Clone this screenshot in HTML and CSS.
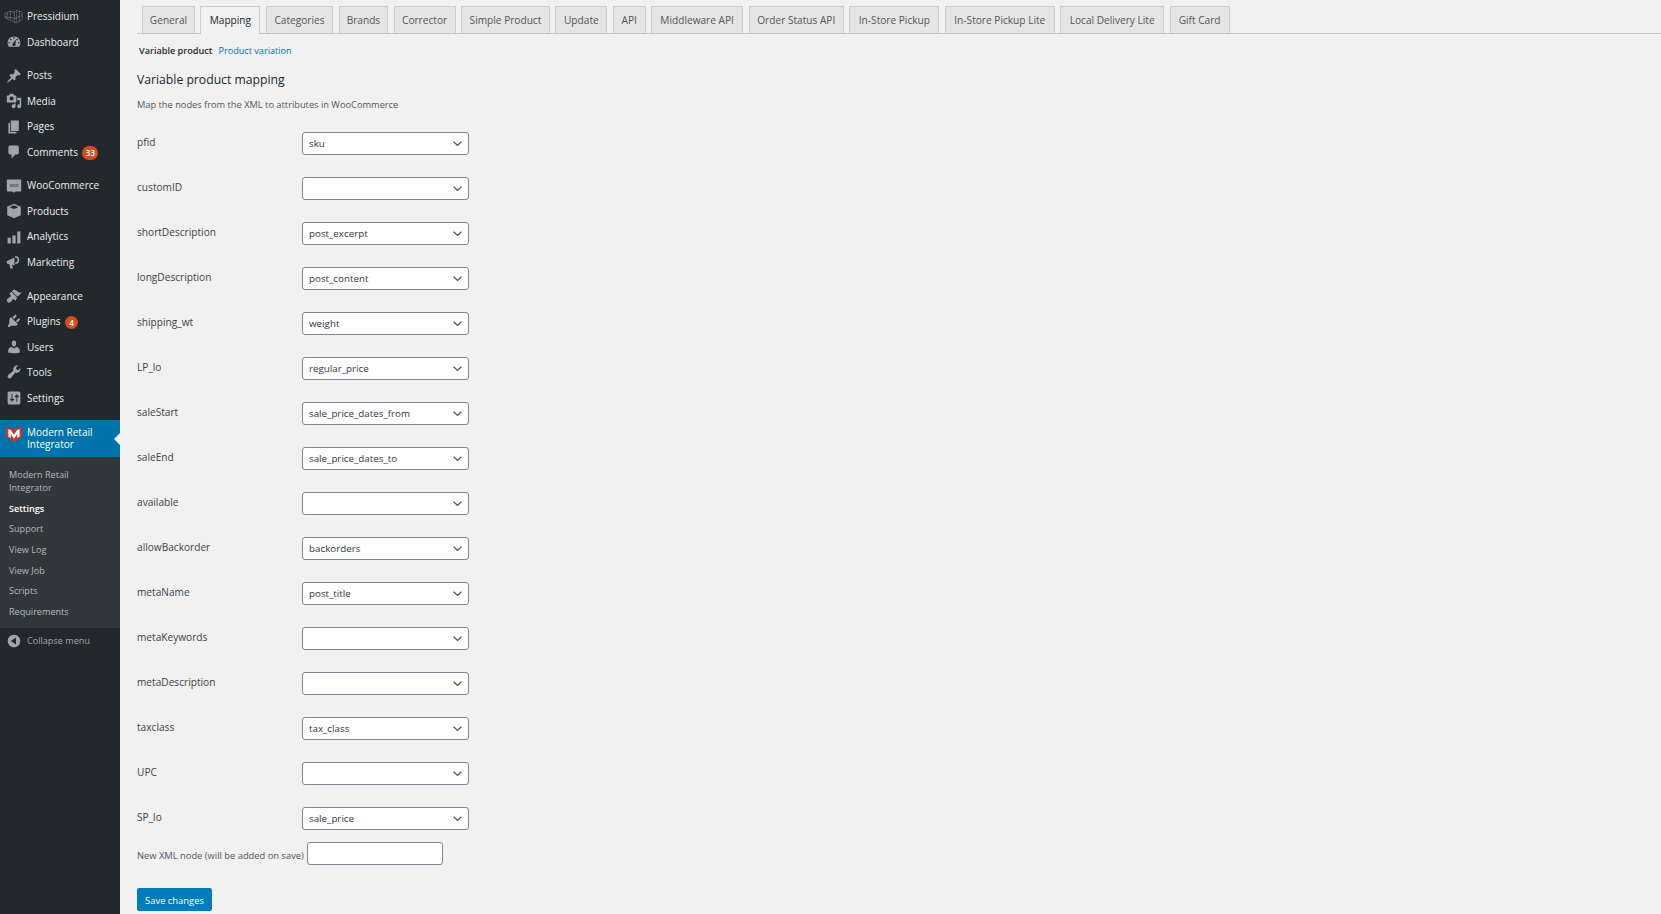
FILE: index.html
```html
<!DOCTYPE html>
<html lang="en">
<head>
<meta charset="utf-8">
<title>Modern Retail Integrator Settings</title>
<link rel="stylesheet" href="styles.css">
</head>
<body>
<div class="shell">
<aside class="sidebar">
  <ul class="menu">
    <li class="item"><svg class="ico wide" viewBox="0 0 24 20"><g fill="none" stroke="#a0a5aa" stroke-width=".8" stroke-dasharray="1.200 .7"><path d="M1 7l7-3 5 1 3-2 7 2v9l-7 5-3-1-5-3-6-2zM8 4v10M13 5v13M16 3v15M1 11l7 1 5 1 3-1 7-3M4 5.500l1 8M19.500 4v12"/></g></svg><span>Pressidium</span></li>
    <li class="item"><svg class="ico" viewBox="0 0 20 20"><path d="M3.760 16h12.480c1.100-1.370 1.760-3.110 1.760-5 0-4.420-3.580-8-8-8s-8 3.580-8 8c0 1.890.66 3.630 1.760 5zM10 4c.55 0 1 .45 1 1s-.45 1-1 1-1-.45-1-1 .45-1 1-1zM6 6c.55 0 1 .45 1 1s-.45 1-1 1-1-.45-1-1 .45-1 1-1zm8 0c.55 0 1 .45 1 1s-.45 1-1 1-1-.45-1-1 .45-1 1-1zm-5.370 5.550L12 7v6c0 1.100-.9 2-2 2s-2-.9-2-2c0-.57.24-1.080.63-1.450zM4 10c.55 0 1 .45 1 1s-.45 1-1 1-1-.45-1-1 .45-1 1-1zm12 0c.55 0 1 .45 1 1s-.45 1-1 1-1-.45-1-1 .45-1 1-1z"/></svg><span>Dashboard</span></li>
    <li class="item gap"><svg class="ico" viewBox="0 0 20 20"><path d="M10.440 3.020l1.820-1.820 6.360 6.350-1.830 1.820c-1.050-.68-2.480-.57-3.410.36l-.75.75c-.92.93-1.040 2.350-.35 3.410l-1.830 1.820-2.410-2.410-2.800 2.790c-.42.42-3.380 2.710-3.800 2.290s1.860-3.390 2.280-3.810l2.790-2.790L4.100 9.360l1.830-1.820c1.050.69 2.480.57 3.400-.36l.75-.75c.93-.92 1.050-2.350.36-3.410z"/></svg><span>Posts</span></li>
    <li class="item"><svg class="ico" viewBox="0 0 20 20"><path d="M13 11V4c0-.55-.45-1-1-1h-1.670L9 1H5L3.670 3H2c-.55 0-1 .45-1 1v7c0 .55.45 1 1 1h10c.55 0 1-.45 1-1zM7 4.500c1.380 0 2.500 1.120 2.500 2.500S8.380 9.500 7 9.500 4.500 8.380 4.500 7 5.620 4.500 7 4.500zM14 6h5v10.500c0 1.380-1.120 2.500-2.500 2.500S14 17.880 14 16.500s1.120-2.500 2.500-2.500c.17 0 .34.020.5.050V9h-3V6zm-4 8.050V13h2v3.500c0 1.380-1.120 2.500-2.500 2.500S7 17.880 7 16.500 8.120 14 9.500 14c.17 0 .34.020.5.050z"/></svg><span>Media</span></li>
    <li class="item"><svg class="ico" viewBox="0 0 20 20"><path d="M6 15V2h10v13H6zm-1 1h8v2H3V5h2v11z"/></svg><span>Pages</span></li>
    <li class="item"><svg class="ico" viewBox="0 0 20 20"><path d="M5 2h9c1.100 0 2 .9 2 2v7c0 1.100-.9 2-2 2h-2l-5 5v-5H5c-1.100 0-2-.9-2-2V4c0-1.100.9-2 2-2z"/></svg><span>Comments</span><b class="badge">33</b></li>
    <li class="item gap"><svg class="ico" viewBox="0 0 20 20"><path d="M2.200 2h15.600c.66 0 1.200.54 1.200 1.200v12.600c0 .66-.54 1.200-1.200 1.200H12l-2 1.500L8 17H2.200C1.540 17 1 16.460 1 15.800V3.200C1 2.540 1.540 2 2.200 2z"/><text class="woo" x="10" y="11.500" text-anchor="middle">woo</text></svg><span>WooCommerce</span></li>
    <li class="item"><svg class="ico" viewBox="0 0 20 20"><path d="M10 1l8.500 3.700v10.600L10 19l-8.500-3.700V4.700zM4.500 5.200L10 7.600l5.500-2.400L10 2.800z" fill-rule="evenodd"/></svg><span>Products</span></li>
    <li class="item"><svg class="ico" viewBox="0 0 20 20"><path d="M2 11h4v7H2zM8 8h4v10H8zM14 3h4v15h-4z"/></svg><span>Analytics</span></li>
    <li class="item"><svg class="ico" viewBox="0 0 20 20"><path d="M1 9l9.500-4.500v10L7.500 13.500l1 4.500H5.300l-1-5.300L1 12z"/><path d="M11.500 2.500a5 5 0 1 1 0 10v-2a3 3 0 1 0 0-6z"/></svg><span>Marketing</span></li>
    <li class="item gap"><svg class="ico" viewBox="0 0 20 20"><path d="M14.480 11.060L7.410 3.990l1.500-1.500c.5-.56 2.300-.47 3.510.32 1.210.8 1.430 1.280 2.910 2.100 1.180.64 2.450 1.260 4.450.85zm-.71.71L6.700 4.700 4.830 6.570c-.39.39-.39 1.020 0 1.410l1.060 1.060c.39.39.39 1.030 0 1.420-.6.6-1.430 1.110-2.210 1.690-.35.26-.7.53-1.010.84C1.430 13.220 1 14.260 1 15.200c0 .6.400 1.900 2 2.800 1.500.9 2.600-.2 3.100-.7.7-.7 1.500-1.900 2.300-3 .4-.5 1-.5 1.500-.1l1.070 1.060c.39.39 1.020.39 1.410 0z"/></svg><span>Appearance</span></li>
    <li class="item"><svg class="ico" viewBox="0 0 20 20"><path d="M13.110 4.360L9.870 7.600 8 5.730l3.240-3.240c.35-.34 1.050-.2 1.560.32.520.51.660 1.210.310 1.550zm-8 1.770l.91-1.120 9.010 9.010-1.190.84c-.71.71-2.630 1.160-3.820 1.160H6.140L4.900 17.260c-.59.59-1.540.59-2.120 0-.59-.58-.59-1.530 0-2.120l1.240-1.240v-3.880c0-1.130.4-3.100 1.090-3.890zm7.260 3.970l3.240-3.240c.34-.35 1.040-.21 1.550.31.520.51.660 1.210.31 1.550l-3.240 3.250z"/></svg><span>Plugins</span><b class="badge small">4</b></li>
    <li class="item"><svg class="ico" viewBox="0 0 20 20"><path d="M10 9.250c-2.270 0-2.730-3.440-2.730-3.440C7 4.020 7.820 2 9.970 2c2.160 0 2.980 2.020 2.710 3.810 0 0-.41 3.440-2.680 3.440zm0 2.570L12.720 10c2.390 0 4.520 2.330 4.520 4.530v2.490s-3.650 1.130-7.240 1.130c-3.650 0-7.240-1.130-7.240-1.130v-2.490c0-2.250 1.940-4.480 4.470-4.480z"/></svg><span>Users</span></li>
    <li class="item"><svg class="ico" viewBox="0 0 20 20"><path d="M16.680 9.770c-1.340 1.340-3.300 1.670-4.950.99l-5.410 6.520c-.99.99-2.590.99-3.570 0-.99-.98-.99-2.580 0-3.570l6.520-5.420c-.68-1.650-.35-3.610.99-4.950 1.280-1.280 3.120-1.620 4.720-1.060l-2.890 2.890 2.820 2.820 2.860-2.870c.53 1.580.18 3.390-1.090 4.650z"/></svg><span>Tools</span></li>
    <li class="item"><svg class="ico" viewBox="0 0 20 20"><path d="M18 16V4c0-1.100-.9-2-2-2H4c-1.100 0-2 .9-2 2v12c0 1.100.9 2 2 2h12c1.100 0 2-.9 2-2zM8 11h1c.55 0 1 .45 1 1s-.45 1-1 1H8v1.500c0 .28-.22.5-.5.5s-.5-.22-.5-.5V13H6c-.55 0-1-.45-1-1s.45-1 1-1h1V5.500c0-.28.22-.5.5-.5s.5.22.5.5V11zm5-2h-1c-.55 0-1-.45-1-1s.45-1 1-1h1V5.500c0-.28.22-.5.5-.5s.5.22.5.5V7h1c.55 0 1 .45 1 1s-.45 1-1 1h-1v5.500c0 .28-.22.5-.5.5s-.5-.22-.5-.5V9z"/></svg><span>Settings</span></li>
    <li class="item current gap"><svg class="ico logo" viewBox="0 0 20 20"><path class="logo-red" d="M0 0l5 3 5 1 5-1 5-3v14l-10 6-10-6z"/><path class="logo-white" d="M3 4l3 1 4 6 4-6 3-1v9l-3 2V10l-4 6-4-6v5l-3-2z"/></svg><span>Modern Retail<br>Integrator</span></li>
  </ul>
  <ul class="submenu">
    <li>Modern Retail<br>Integrator</li>
    <li class="on">Settings</li>
    <li>Support</li>
    <li>View Log</li>
    <li>View Job</li>
    <li>Scripts</li>
    <li>Requirements</li>
  </ul>
  <div class="item collapse"><svg class="ico" viewBox="0 0 20 20"><path d="M10 2.160c4.330 0 7.840 3.510 7.840 7.840s-3.510 7.840-7.840 7.840S2.160 14.330 2.160 10 5.670 2.160 10 2.160zM12.500 14.500v-9L6 10z" fill-rule="evenodd"/></svg><span>Collapse menu</span></div>
</aside>
<main class="content">
  <nav class="tabs">
    <a class="tab">General</a><a class="tab active">Mapping</a><a class="tab">Categories</a><a class="tab">Brands</a><a class="tab">Corrector</a><a class="tab">Simple Product</a><a class="tab">Update</a><a class="tab">API</a><a class="tab">Middleware API</a><a class="tab">Order Status API</a><a class="tab">In-Store Pickup</a><a class="tab">In-Store Pickup Lite</a><a class="tab">Local Delivery Lite</a><a class="tab">Gift Card</a>
  </nav>
  <div class="subnav"><strong>Variable product</strong><a>Product variation</a></div>
  <h2 class="title">Variable product mapping</h2>
  <p class="desc">Map the nodes from the XML to attributes in WooCommerce</p>
  <form class="mapping">
    <div class="row"><label>pfid</label><select><option>sku</option></select></div>
    <div class="row"><label>customID</label><select><option></option></select></div>
    <div class="row"><label>shortDescription</label><select><option>post_excerpt</option></select></div>
    <div class="row"><label>longDescription</label><select><option>post_content</option></select></div>
    <div class="row"><label>shipping_wt</label><select><option>weight</option></select></div>
    <div class="row"><label>LP_lo</label><select><option>regular_price</option></select></div>
    <div class="row"><label>saleStart</label><select><option>sale_price_dates_from</option></select></div>
    <div class="row"><label>saleEnd</label><select><option>sale_price_dates_to</option></select></div>
    <div class="row"><label>available</label><select><option></option></select></div>
    <div class="row"><label>allowBackorder</label><select><option>backorders</option></select></div>
    <div class="row"><label>metaName</label><select><option>post_title</option></select></div>
    <div class="row"><label>metaKeywords</label><select><option></option></select></div>
    <div class="row"><label>metaDescription</label><select><option></option></select></div>
    <div class="row"><label>taxclass</label><select><option>tax_class</option></select></div>
    <div class="row"><label>UPC</label><select><option></option></select></div>
    <div class="row"><label>SP_lo</label><select><option>sale_price</option></select></div>
    <div class="newnode"><label>New XML node (will be added on save)</label><input type="text"></div>
    <button type="button" class="save">Save changes</button>
  </form>
</main>
</div>
</body>
</html>
```
FILE: styles.css
```css
* { box-sizing: border-box; }
html, body { margin: 0; height: 100%; }
body { background: #f1f1f1; color: #444; font-family: "Open Sans", "Noto Sans", sans-serif; font-size: 10px; overflow: hidden; }
ul { list-style: none; margin: 0; padding: 0; }
.shell { display: flex; height: 914px; }
.sidebar { width: 120px; flex: none; background: #23282d; color: #eee; padding-top: 3.700px; font-size: 10px; }
.item { display: flex; align-items: center; height: 25.500px; padding-left: 6px; position: relative; }
.item.gap { margin-top: 8.170px; }
.item span { margin-left: 5px; line-height: 12.700px; }
.ico { width: 16px; height: 16px; flex: none; fill: #a0a5aa; }
.ico.wide { width: 19px; margin: 0 -1px 0 -2px; }
.ico.logo { align-self: flex-start; margin-top: 6px; }
.woo { font-size: 5.500px; fill: #23282d; font-family: "Open Sans", sans-serif; }
.badge { margin-left: 4.500px; min-width: 16px; height: 13.500px; border-radius: 7px; background: #d54e21; color: #fff; font-size: 8px; font-weight: 600; text-align: center; line-height: 13.500px; padding: 0 3px; margin-top: 2px; }
.badge.small { min-width: 13px; padding: 0; }
.current { background: #0073aa; color: #fff; height: 37.500px; }
.item.current { margin-top: 9px; }
.current::after { content: ""; position: absolute; right: 0; top: 13px; border: 6px solid transparent; border-right-color: #f1f1f1; border-left: 0; }
.logo-red { fill: #c0392b; }
.logo-white { fill: #fff; }
.submenu { background: #32373c; padding: 8.400px 0 5.200px 9px; color: #b4b9be; font-size: 9.100px; }
.submenu li { line-height: 12.800px; padding: 3.900px 0; }
.submenu li.on { color: #fff; font-weight: 600; }
.collapse { color: #a0a5aa; margin-top: 1px; font-size: 9.100px; }
.content { flex: 1; min-width: 0; padding-left: 17px; }
.tabs { display: flex; gap: 5.400px; height: 34px; padding: 6px 0 0 5px; border-bottom: 1px solid #c3c4c7; font-size: 10.150px; }
.tab { display: block; height: 27px; line-height: 26px; text-align: center; border: 1px solid #ccc; border-bottom: 0; background: #e5e5e5; color: #555; white-space: nowrap; }
.tab:nth-child(1) { width: 53px; }
.tab:nth-child(2) { width: 60px; }
.tab:nth-child(3) { width: 67.500px; }
.tab:nth-child(4) { width: 49.500px; }
.tab:nth-child(5) { width: 62px; }
.tab:nth-child(6) { width: 89px; }
.tab:nth-child(7) { width: 52px; }
.tab:nth-child(8) { width: 33px; }
.tab:nth-child(9) { width: 92px; }
.tab:nth-child(10) { width: 95.500px; }
.tab:nth-child(11) { width: 90px; }
.tab:nth-child(12) { width: 110px; }
.tab:nth-child(13) { width: 104px; }
.tab:nth-child(14) { width: 60px; }
.tab.active { background: #f1f1f1; color: #23282d; height: 28px; }
.subnav { display: flex; gap: 6px; padding-left: 2px; margin-top: 10px; line-height: 14px; font-size: 9.150px; }
.subnav strong { color: #23282d; font-weight: 600; }
.subnav a { color: #0073aa; }
.title { margin: 13px 0 0; font-size: 12.200px; line-height: 17px; font-weight: 500; color: #23282d; }
.desc { margin: 10px 0 0; font-size: 9.270px; line-height: 14px; color: #50575e; }
.mapping { margin-top: 9.200px; }
.row { display: flex; align-items: center; height: 45px; }
.row label { width: 165px; flex: none; font-size: 10.150px; color: #3c434a; position: relative; top: -1.500px; }
select { width: 167px; height: 23px; border: 1px solid #7e8993; border-radius: 3px; background: #fff url("data:image/svg+xml,%3Csvg xmlns='http://www.w3.org/2000/svg' viewBox='0 0 20 20'%3E%3Cpath d='M3 7l7 6.500L17 7' fill='none' stroke='%23555' stroke-width='2.400'/%3E%3C/svg%3E") no-repeat right 5px center / 11px 11px; appearance: none; -webkit-appearance: none; padding: 0 18px 0 6px; font: inherit; font-size: 9.800px; color: #32373c; }
.newnode { display: flex; align-items: center; gap: 3px; height: 23px; margin-top: 1.300px; }
.newnode label { font-size: 9.350px; color: #50575e; position: relative; top: 2px; }
.newnode input { width: 136px; height: 23px; border: 1px solid #7e8993; border-radius: 3px; background: #fff; }
.save { display: block; margin-top: 23px; width: 75px; height: 23px; border: 0; border-radius: 2px; background: #007cba; color: #fff; font: inherit; font-size: 9.400px; font-weight: 500; padding: 1px 0 0; }
```
